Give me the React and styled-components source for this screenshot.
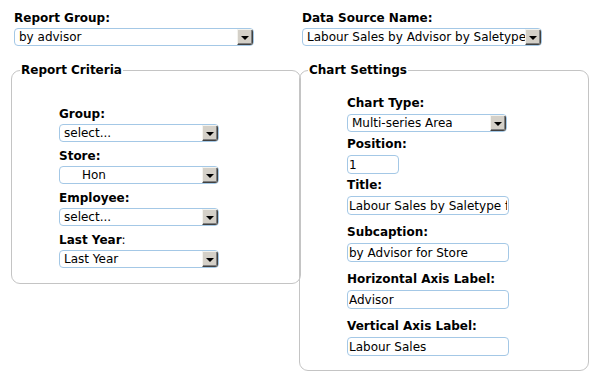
import React from 'react';
import styled, { createGlobalStyle } from 'styled-components';

const GlobalStyle = createGlobalStyle`
  body {
    margin: 0;
    background: #fff;
    font-family: "DejaVu Sans", Verdana, sans-serif;
    font-size: 12px;
    color: #000;
  }
`;

const Page = styled.div`
  display: grid;
  grid-template-columns: 288px 290px;
  align-items: start;
  padding: 11px 0 0 11px;
`;

const Column = styled.div`
  display: flex;
  flex-direction: column;
`;

const TopField = styled.div`
  padding-left: 3px;
`;

const Label = styled.div`
  font-weight: bold;
  line-height: 14px;
  margin-bottom: ${p => p.$space ?? 3}px;
  white-space: nowrap;
`;

const Plain = styled.span`
  font-weight: normal;
`;

const Field = styled.div`
  margin-bottom: ${p => p.$gap}px;
`;

const SelectBox = styled.div`
  box-sizing: border-box;
  width: ${p => p.$width}px;
  height: 18px;
  display: flex;
  align-items: center;
  border: 1px solid #a4c8e6;
  border-radius: 4px;
  background: #fff;
  overflow: hidden;
`;

const SelectText = styled.span`
  flex: 1;
  padding-left: ${p => 4 + (p.$indent || 0)}px;
  line-height: 14px;
  white-space: nowrap;
  overflow: hidden;
`;

const DropButton = styled.span`
  box-sizing: border-box;
  flex: none;
  width: 16px;
  height: 16px;
  display: flex;
  align-items: center;
  justify-content: center;
  background: #d4d0c8;
  border-top: 1px solid #f4f3ee;
  border-left: 1px solid #f4f3ee;
  border-right: 1px solid #404040;
  border-bottom: 1px solid #404040;
  box-shadow: inset -1px -1px 0 #808080;
`;

const Arrow = styled.span`
  width: 0;
  height: 0;
  margin: 1px 1px 0 0;
  border-left: 4px solid transparent;
  border-right: 4px solid transparent;
  border-top: 4px solid #000;
`;

const TextInput = styled.input`
  box-sizing: border-box;
  display: block;
  width: ${p => p.$width}px;
  height: 19px;
  margin: 0;
  padding: 0 1px;
  border: 1px solid #a4c8e6;
  border-radius: 4px;
  font-family: "DejaVu Sans", Verdana, sans-serif;
  font-size: 12px;
  color: #000;
  background: #fff;
  outline: none;
`;

const Fieldset = styled.fieldset`
  box-sizing: border-box;
  margin: 17px ${p => p.$overlap ? '-2px' : '0'} 0 0;
  padding: 0;
  min-width: 0;
  border: 1px solid #c4c4c4;
  border-radius: 9px;
`;

const Legend = styled.legend`
  margin-left: 8px;
  padding: 0 1px;
  font-weight: bold;
  line-height: 14px;
`;

const Inner = styled.div`
  padding: ${p => p.$top}px 0 ${p => p.$bottom}px 47px;
`;

const Select = ({ width, value, indent }) => (
  <SelectBox $width={width}>
    <SelectText $indent={indent}>{value}</SelectText>
    <DropButton><Arrow /></DropButton>
  </SelectBox>
);

const App = () => (
  <>
    <GlobalStyle />
    <Page>
      <Column>
        <TopField>
          <Label>Report Group:</Label>
          <Select width={240} value="by advisor" />
        </TopField>
        <Fieldset $overlap>
          <Legend>Report Criteria</Legend>
          <Inner $top={30} $bottom={8}>
            <Field $gap={7}>
              <Label>Group:</Label>
              <Select width={160} value="select..." />
            </Field>
            <Field $gap={7}>
              <Label>Store:</Label>
              <Select width={160} value="Hon" indent={18} />
            </Field>
            <Field $gap={7}>
              <Label>Employee:</Label>
              <Select width={160} value="select..." />
            </Field>
            <Field $gap={7}>
              <Label>Last Year<Plain>:</Plain></Label>
              <Select width={160} value="Last Year" />
            </Field>
          </Inner>
        </Fieldset>
      </Column>
      <Column>
        <TopField>
          <Label>Data Source Name:</Label>
          <Select width={240} value="Labour Sales by Advisor by Saletype" />
        </TopField>
        <Fieldset>
          <Legend>Chart Settings</Legend>
          <Inner $top={19} $bottom={4}>
            <Field $gap={5}>
              <Label $space={4}>Chart Type:</Label>
              <Select width={160} value="Multi-series Area" />
            </Field>
            <Field $gap={4}>
              <Label $space={4}>Position:</Label>
              <TextInput $width={52} defaultValue="1" />
            </Field>
            <Field $gap={10}>
              <Label $space={4}>Title:</Label>
              <TextInput $width={162} defaultValue="Labour Sales by Saletype for Store" />
            </Field>
            <Field $gap={10}>
              <Label $space={4}>Subcaption:</Label>
              <TextInput $width={162} defaultValue="by Advisor for Store" />
            </Field>
            <Field $gap={10}>
              <Label $space={4}>Horizontal Axis Label:</Label>
              <TextInput $width={162} defaultValue="Advisor" />
            </Field>
            <Field $gap={10}>
              <Label $space={4}>Vertical Axis Label:</Label>
              <TextInput $width={162} defaultValue="Labour Sales" />
            </Field>
          </Inner>
        </Fieldset>
      </Column>
    </Page>
  </>
);

export default App;
